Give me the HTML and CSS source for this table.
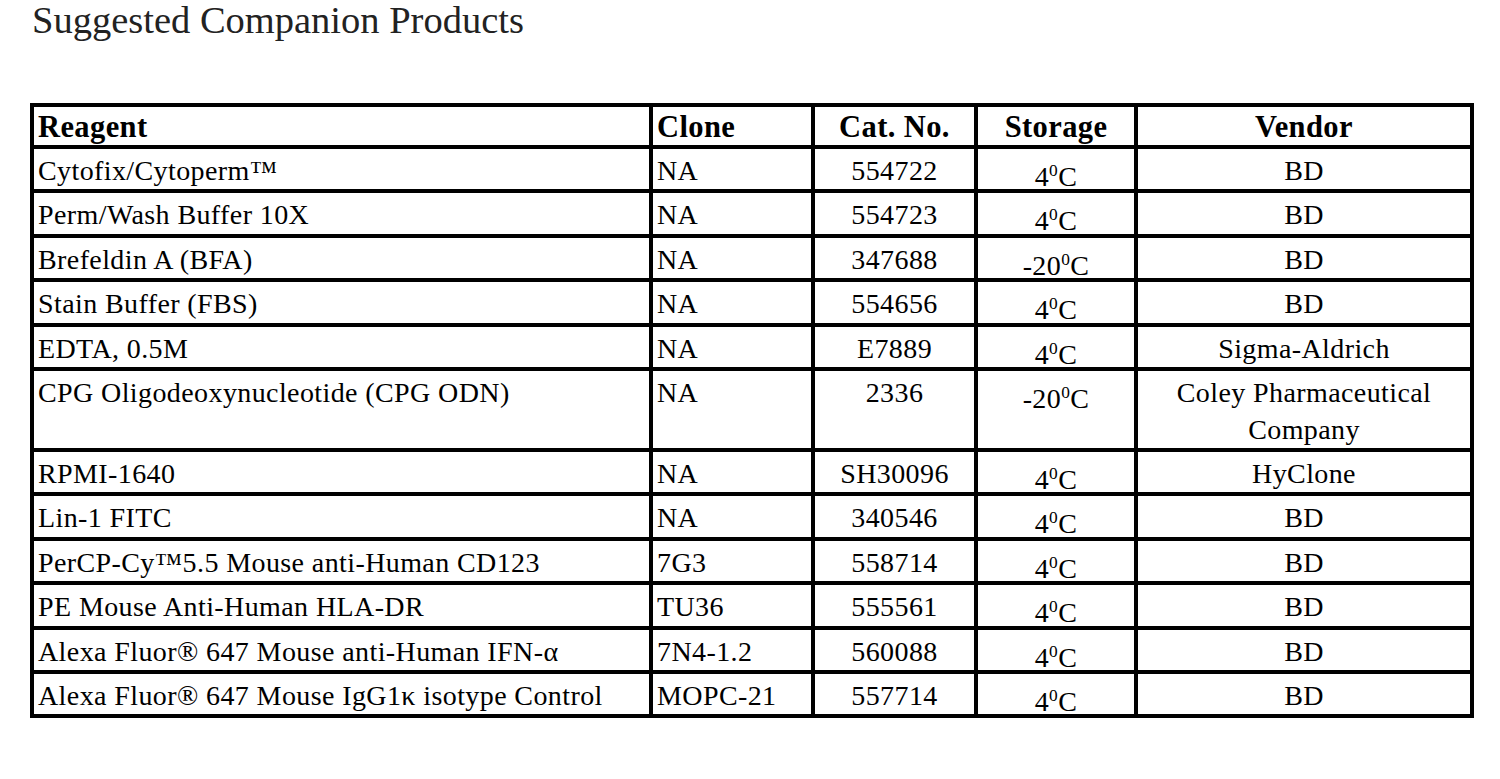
FILE: index.html
```html
<!DOCTYPE html>
<html>
<head>
<meta charset="utf-8">
<link rel="stylesheet" href="styles.css">
</head>
<body>
<h1 class="title">Suggested Companion Products</h1>
<table class="products">
  <colgroup>
    <col class="c-reagent"><col class="c-clone"><col class="c-cat"><col class="c-storage"><col class="c-vendor">
  </colgroup>
  <thead>
    <tr><th class="left">Reagent</th><th class="left">Clone</th><th>Cat. No.</th><th>Storage</th><th>Vendor</th></tr>
  </thead>
  <tbody>
    <tr><td>Cytofix/Cytoperm™</td><td>NA</td><td class="ctr">554722</td><td class="stor">4<sup>0</sup>C</td><td class="ctr">BD</td></tr>
    <tr><td>Perm/Wash Buffer 10X</td><td>NA</td><td class="ctr">554723</td><td class="stor">4<sup>0</sup>C</td><td class="ctr">BD</td></tr>
    <tr><td>Brefeldin A (BFA)</td><td>NA</td><td class="ctr">347688</td><td class="stor">-20<sup>0</sup>C</td><td class="ctr">BD</td></tr>
    <tr><td>Stain Buffer (FBS)</td><td>NA</td><td class="ctr">554656</td><td class="stor">4<sup>0</sup>C</td><td class="ctr">BD</td></tr>
    <tr><td>EDTA, 0.5M</td><td>NA</td><td class="ctr">E7889</td><td class="stor">4<sup>0</sup>C</td><td class="ctr">Sigma-Aldrich</td></tr>
    <tr class="tall"><td>CPG Oligodeoxynucleotide (CPG ODN)</td><td>NA</td><td class="ctr">2336</td><td class="stor">-20<sup>0</sup>C</td><td class="ctr wrap">Coley Pharmaceutical<br>Company</td></tr>
    <tr><td>RPMI-1640</td><td>NA</td><td class="ctr">SH30096</td><td class="stor">4<sup>0</sup>C</td><td class="ctr">HyClone</td></tr>
    <tr><td>Lin-1 FITC</td><td>NA</td><td class="ctr">340546</td><td class="stor">4<sup>0</sup>C</td><td class="ctr">BD</td></tr>
    <tr><td>PerCP-Cy™5.5 Mouse anti-Human CD123</td><td>7G3</td><td class="ctr">558714</td><td class="stor">4<sup>0</sup>C</td><td class="ctr">BD</td></tr>
    <tr><td>PE Mouse Anti-Human HLA-DR</td><td>TU36</td><td class="ctr">555561</td><td class="stor">4<sup>0</sup>C</td><td class="ctr">BD</td></tr>
    <tr><td>Alexa Fluor® 647 Mouse anti-Human IFN-α</td><td>7N4-1.2</td><td class="ctr">560088</td><td class="stor">4<sup>0</sup>C</td><td class="ctr">BD</td></tr>
    <tr><td>Alexa Fluor® 647 Mouse IgG1κ isotype Control</td><td>MOPC-21</td><td class="ctr">557714</td><td class="stor">4<sup>0</sup>C</td><td class="ctr">BD</td></tr>
  </tbody>
</table>
</body>
</html>
```
FILE: styles.css
```css
html, body {
  margin: 0;
  padding: 0;
  background: #fff;
  color: #000;
  font-family: "Liberation Serif", "Times New Roman", serif;
}

body {
  padding: 0 0 0 30px;
}

.title {
  margin: 0 0 0 2px;
  font-weight: normal;
  font-size: 38.5px;
  line-height: 40px;
  color: #222;
}

.products {
  margin-top: 63px;
  border-collapse: collapse;
  table-layout: fixed;
  width: 1442px;
  font-size: 28px;
  letter-spacing: 0.4px;
}

.c-reagent { width: 619px; }
.c-clone { width: 162px; }
.c-cat { width: 163px; }
.c-storage { width: 160px; }
.c-vendor { width: 336px; }

.products th,
.products td {
  border: 4px solid #000;
  padding: 3px 4px 0;
  line-height: 37px;
  height: 37.4px;
  vertical-align: top;
  white-space: nowrap;
  overflow: hidden;
}

.products th {
  font-weight: bold;
  font-size: 30.5px;
  letter-spacing: 0.4px;
  text-align: center;
  padding-top: 2px;
  line-height: 36px;
  height: 35.5px;
}

.products th.left { text-align: left; }

.products td.ctr { text-align: center; }

.products td.stor {
  text-align: center;
  padding-top: 15px;
  line-height: 25px;
  height: 25.4px;
}

.products tr.tall td {
  height: 70px;
  padding-top: 3px;
}

.products tr.tall td.stor {
  height: 58px;
  padding-top: 15px;
}

.products td.wrap {
  line-height: 37px;
}

sup {
  font-size: 0.62em;
  line-height: 0;
  vertical-align: 0.55em;
}
```
